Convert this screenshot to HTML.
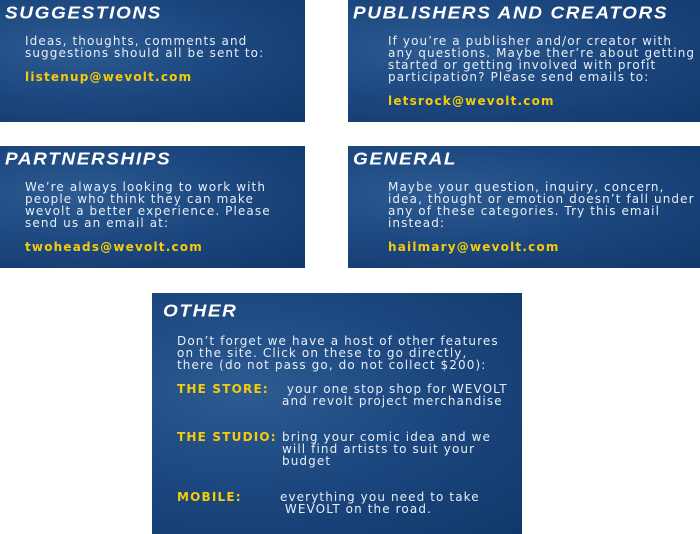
<!DOCTYPE html>
<html><head><style>
body{margin:0;width:700px;height:534px;background:#fff;position:relative;overflow:hidden;font-family:"DejaVu Sans","Liberation Sans",sans-serif}
.p{position:absolute;background:radial-gradient(ellipse at 25% 40%,#2d5b92 0%,#1d4880 45%,#10386a 100%);color:#fff}
.t{position:absolute;left:5px;top:4px;font:italic bold 19px "Liberation Sans",sans-serif;letter-spacing:1.6px;text-transform:uppercase;transform:scaleY(0.9);transform-origin:left top}
.b{position:absolute;font-size:12px;line-height:12px;letter-spacing:1.1px;color:#e8eef6}
.y{color:#f5cc0a;font-weight:bold;letter-spacing:1.2px}
</style></head><body>
<div class="p" style="left:0;top:0;width:305px;height:122px">
<div class="t">Suggestions</div>
<div class="b" style="left:25px;top:35px">Ideas, thoughts, comments and<br>suggestions should all be sent to:<br><br><span class="y">listenup@wevolt.com</span></div></div>
<div class="p" style="left:348px;top:0;width:352px;height:122px">
<div class="t">Publishers and Creators</div>
<div class="b" style="left:40px;top:35px">If you’re a publisher and/or creator with<br>any questions. Maybe ther’re about getting<br>started or getting involved with profit<br>participation? Please send emails to:<br><br><span class="y">letsrock@wevolt.com</span></div></div>
<div class="p" style="left:0;top:146px;width:305px;height:122px">
<div class="t">Partnerships</div>
<div class="b" style="left:25px;top:35px">We’re always looking to work with<br>people who think they can make<br>wevolt a better experience. Please<br>send us an email at:<br><br><span class="y">twoheads@wevolt.com</span></div></div>
<div class="p" style="left:348px;top:146px;width:352px;height:122px">
<div class="t">General</div>
<div class="b" style="left:40px;top:35px">Maybe your question, inquiry, concern,<br>idea, thought or emotion doesn’t fall under<br>any of these categories. Try this email<br>instead:<br><br><span class="y">hailmary@wevolt.com</span></div></div>
<div class="p" style="left:152px;top:293px;width:370px;height:241px">
<div class="t" style="left:11px;top:9px">Other</div>
<div class="b" style="left:25px;top:42px">Don’t forget we have a host of other features<br>on the site. Click on these to go directly,<br>there (do not pass go, do not collect $200):</div>
<div class="b y" style="left:25px;top:90px">THE STORE:</div>
<div class="b" style="left:130px;top:90px">&nbsp;your one stop shop for WEVOLT<br>and revolt project merchandise</div>
<div class="b y" style="left:25px;top:138px">THE STUDIO:</div>
<div class="b" style="left:130px;top:138px">bring your comic idea and we<br>will find artists to suit your<br>budget</div>
<div class="b y" style="left:25px;top:198px">MOBILE:</div>
<div class="b" style="left:128px;top:198px">everything you need to take<br>&nbsp;WEVOLT on the road.</div></div>
</body></html>
